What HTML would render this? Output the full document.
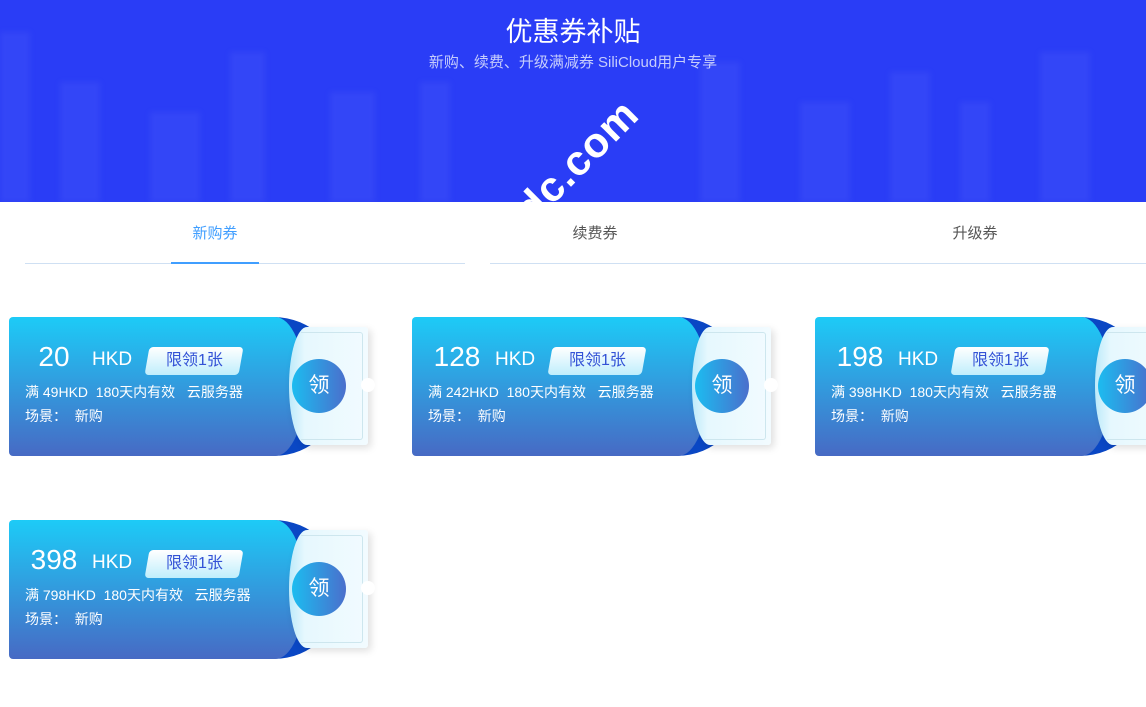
<!DOCTYPE html>
<html><head><meta charset="utf-8"><style>
*{margin:0;padding:0;box-sizing:border-box}
body{width:1146px;height:707px;overflow:hidden;background:#fff;font-family:"Liberation Sans","Noto Sans CJK SC",sans-serif;position:relative}
.hd{position:absolute;left:0;top:0;width:1146px;height:202px;background:#2a3df6;overflow:hidden}
.bld{position:absolute;background:rgba(120,140,255,.12);bottom:0;filter:blur(3px)}
.t1{position:absolute;top:10px;width:100%;text-align:center;color:#fff;font-size:27px}
.t2{position:absolute;top:51px;width:100%;text-align:center;color:#c6cdfc;font-size:15px}
.wm{position:absolute;left:506px;top:198px;color:#fff;font-size:42px;font-weight:bold;transform:rotate(-45deg);transform-origin:left top;letter-spacing:1px}
.tab{position:absolute;top:222px;font-size:15px;color:#555;width:100px;text-align:center}
.line{position:absolute;top:263px;height:1px;background:#cfe0f3}
.card{position:absolute;width:370px;height:140px}
.dark{position:absolute;left:260px;top:0;width:74px;height:139px;background:#0a47c4;border-radius:0 70px 70px 0}
.main{position:absolute;left:0;top:0;width:296px;height:139px;border-radius:4px 30px 30px 4px/4px 70px 70px 4px;background:linear-gradient(#1dcbf7,#476ac4)}
.stub{position:absolute;left:280px;top:10px;width:79px;height:118px;background:linear-gradient(90deg,#bdeafa,#e6f8fe 20%,#f2fbff);border-radius:18px 3px 3px 18px/59px 3px 3px 59px;box-shadow:3px 3px 8px rgba(0,0,0,.13)}
.stub:before{content:"";position:absolute;left:12px;top:5px;right:5px;bottom:5px;border:1px solid #cde6ee;border-left:none;border-radius:0 3px 3px 0}
.notch{position:absolute;left:352px;top:61px;width:14px;height:14px;border-radius:50%;background:#fff}
.circ{position:absolute;left:283px;top:42px;width:54px;height:54px;border-radius:50%;background:linear-gradient(90deg,#1cbcf0,#4a6fcc);color:#fff;font-size:21px;text-align:center;line-height:54px}
.num{position:absolute;left:10px;width:70px;text-align:center;top:24px;color:#fff;font-size:28px}
.hkd{position:absolute;left:83px;top:32px;color:#fff;font-size:19px}
.bdg{position:absolute;left:138px;top:30px;width:94px;height:28px;background:linear-gradient(#ffffff,#bfeefc);transform:skewX(-10deg);border-radius:4px;color:#3352d6;font-size:16px;text-align:center;line-height:28px}
.bdg span{display:inline-block;transform:skewX(10deg)}
.l2{position:absolute;left:16px;top:65px;color:#fff;font-size:14px;white-space:pre}
.l3{position:absolute;left:16px;top:89px;color:#fff;font-size:14px;white-space:pre}
</style></head><body>
<div class="hd">
<div class="bld" style="left:0;width:30px;height:170px"></div>
<div class="bld" style="left:60px;width:40px;height:120px"></div>
<div class="bld" style="left:150px;width:50px;height:90px"></div>
<div class="bld" style="left:230px;width:35px;height:150px"></div>
<div class="bld" style="left:330px;width:45px;height:110px"></div>
<div class="bld" style="left:420px;width:30px;height:120px"></div>
<div class="bld" style="left:700px;width:40px;height:140px"></div>
<div class="bld" style="left:800px;width:50px;height:100px"></div>
<div class="bld" style="left:890px;width:40px;height:130px"></div>
<div class="bld" style="left:960px;width:30px;height:100px"></div>
<div class="bld" style="left:1040px;width:50px;height:150px"></div>
<div class="t1">优惠券补贴</div>
<div class="t2">新购、续费、升级满减券 SiliCloud用户专享</div>
<div class="wm">dc.com</div>
</div>
<div class="tab" style="left:165px;color:#409eff">新购券</div>
<div class="tab" style="left:545px">续费券</div>
<div class="tab" style="left:925px">升级券</div>
<div class="line" style="left:25px;width:440px"></div>
<div class="line" style="left:490px;width:656px"></div>
<div style="position:absolute;left:171px;top:262px;width:88px;height:2px;background:#409eff"></div>

<div class="card" style="left:9px;top:317px"><div class="dark"></div><div class="main"></div><div class="stub"></div><div class="notch"></div><div class="circ">领</div><div class="num">20</div><div class="hkd">HKD</div><div class="bdg"><span>限领1张</span></div><div class="l2">满 49HKD  180天内有效   云服务器</div><div class="l3">场景：  新购</div></div>
<div class="card" style="left:412px;top:317px"><div class="dark"></div><div class="main"></div><div class="stub"></div><div class="notch"></div><div class="circ">领</div><div class="num">128</div><div class="hkd">HKD</div><div class="bdg"><span>限领1张</span></div><div class="l2">满 242HKD  180天内有效   云服务器</div><div class="l3">场景：  新购</div></div>
<div class="card" style="left:815px;top:317px"><div class="dark"></div><div class="main"></div><div class="stub"></div><div class="notch"></div><div class="circ">领</div><div class="num">198</div><div class="hkd">HKD</div><div class="bdg"><span>限领1张</span></div><div class="l2">满 398HKD  180天内有效   云服务器</div><div class="l3">场景：  新购</div></div>
<div class="card" style="left:9px;top:520px"><div class="dark"></div><div class="main"></div><div class="stub"></div><div class="notch"></div><div class="circ">领</div><div class="num">398</div><div class="hkd">HKD</div><div class="bdg"><span>限领1张</span></div><div class="l2">满 798HKD  180天内有效   云服务器</div><div class="l3">场景：  新购</div></div>
</body></html>
